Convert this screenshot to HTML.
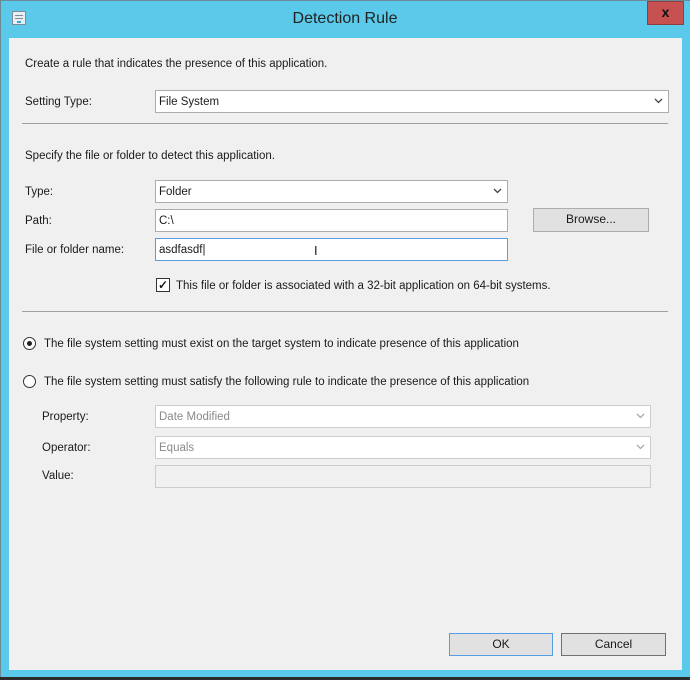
<!DOCTYPE html>
<html><head><style>
*{box-sizing:border-box;margin:0;padding:0}
body{width:690px;height:680px;background:#5bc9ea;position:relative;overflow:hidden;font-family:"Liberation Sans",sans-serif;font-size:11.5px;color:#1a1a1a}
.a{position:absolute}
.t{position:absolute;white-space:nowrap;line-height:14px}
.box{position:absolute;background:#fff;border:1px solid #acacac}
.box span{position:absolute;left:3px;top:4px;line-height:14px}
.box svg{position:absolute;right:5px;top:7px}
.btn{position:absolute;background:#e1e1e1;border:1px solid #adadad;text-align:center;line-height:20px;font-size:12px}
.sep{position:absolute;height:1px;background:#a0a0a0;left:22px;width:646px}
.g{color:#8a8a8a}
</style></head><body>
<div class="a" style="left:0;top:0;width:690px;height:1px;background:#6b8a96"></div>
<div class="a" style="left:0;top:0;width:1px;height:680px;background:#6b8a96"></div>
<div class="a" style="left:12px;top:11px;width:14px;height:14px;border:1px solid #7d8c96;background:#e8eef2"></div>
<div class="a" style="left:15px;top:15px;width:8px;height:1px;background:#7d8c96"></div>
<div class="a" style="left:15px;top:18px;width:8px;height:1px;background:#7d8c96"></div>
<div class="a" style="left:17px;top:21px;width:4px;height:2px;background:#3aa7dd"></div>
<div class="t" style="left:0;width:690px;text-align:center;top:10px;font-size:16px;line-height:18px;color:#222">Detection Rule</div>
<div class="a" style="left:647px;top:1px;width:37px;height:24px;background:#c75050;border:1px solid #8e4040;color:#111;font-weight:bold;font-size:14px;text-align:center;line-height:21px">x</div>
<div class="a" style="left:9px;top:38px;width:673px;height:632px;background:#f0f0f0"></div>
<div class="a" style="left:0;top:677px;width:690px;height:3px;background:#2b2b2b"></div>

<div class="t" style="left:25px;top:57px">Create a rule that indicates the presence of this application.</div>
<div class="t" style="left:25px;top:95px">Setting Type:</div>
<div class="box" style="left:155px;top:90px;width:514px;height:23px"><span>File System</span><svg width="9" height="6"><path d="M1 1L4.5 4.5L8 1" stroke="#444" stroke-width="1.3" fill="none"/></svg></div>
<div class="sep" style="top:123px"></div>
<div class="t" style="left:25px;top:149px">Specify the file or folder to detect this application.</div>
<div class="t" style="left:25px;top:185px">Type:</div>
<div class="box" style="left:155px;top:180px;width:353px;height:23px"><span>Folder</span><svg width="9" height="6"><path d="M1 1L4.5 4.5L8 1" stroke="#444" stroke-width="1.3" fill="none"/></svg></div>
<div class="t" style="left:25px;top:214px">Path:</div>
<div class="box" style="left:155px;top:209px;width:353px;height:23px"><span>C:\</span></div>
<div class="btn" style="left:533px;top:208px;width:116px;height:24px">Browse...</div>
<div class="t" style="left:25px;top:243px">File or folder name:</div>
<div class="box" style="left:155px;top:238px;width:353px;height:23px;border-color:#569de5"><span>asdfasdf|</span></div>
<div class="t" style="left:314px;top:244px;font-size:13px">I</div>
<div class="a" style="left:156px;top:278px;width:14px;height:14px;border:1px solid #333;background:#fff;font-size:12px;line-height:12px;text-align:center;font-weight:bold">&#10003;</div>
<div class="t" style="left:176px;top:279px">This file or folder is associated with a 32-bit application on 64-bit systems.</div>
<div class="sep" style="top:311px"></div>
<div class="a" style="left:23px;top:337px;width:13px;height:13px;border:1px solid #333;border-radius:50%;background:#fff"></div>
<div class="a" style="left:27px;top:341px;width:5px;height:5px;border-radius:50%;background:#222"></div>
<div class="t" style="left:44px;top:337px">The file system setting must exist on the target system to indicate presence of this application</div>
<div class="a" style="left:23px;top:375px;width:13px;height:13px;border:1px solid #333;border-radius:50%;background:#fff"></div>
<div class="t" style="left:44px;top:375px">The file system setting must satisfy the following rule to indicate the presence of this application</div>
<div class="t" style="left:42px;top:410px">Property:</div>
<div class="box" style="left:155px;top:405px;width:496px;height:23px;border-color:#ccc"><span class="g">Date Modified</span><svg width="9" height="6"><path d="M1 1L4.5 4.5L8 1" stroke="#aaa" stroke-width="1.3" fill="none"/></svg></div>
<div class="t" style="left:42px;top:441px">Operator:</div>
<div class="box" style="left:155px;top:436px;width:496px;height:23px;border-color:#ccc"><span class="g">Equals</span><svg width="9" height="6"><path d="M1 1L4.5 4.5L8 1" stroke="#aaa" stroke-width="1.3" fill="none"/></svg></div>
<div class="t" style="left:42px;top:469px">Value:</div>
<div class="box" style="left:155px;top:465px;width:496px;height:23px;border-color:#ccc;background:#f0f0f0"></div>
<div class="btn" style="left:449px;top:633px;width:104px;height:23px;border-color:#569de5">OK</div>
<div class="btn" style="left:561px;top:633px;width:105px;height:23px;border-color:#707070">Cancel</div>
</body></html>
